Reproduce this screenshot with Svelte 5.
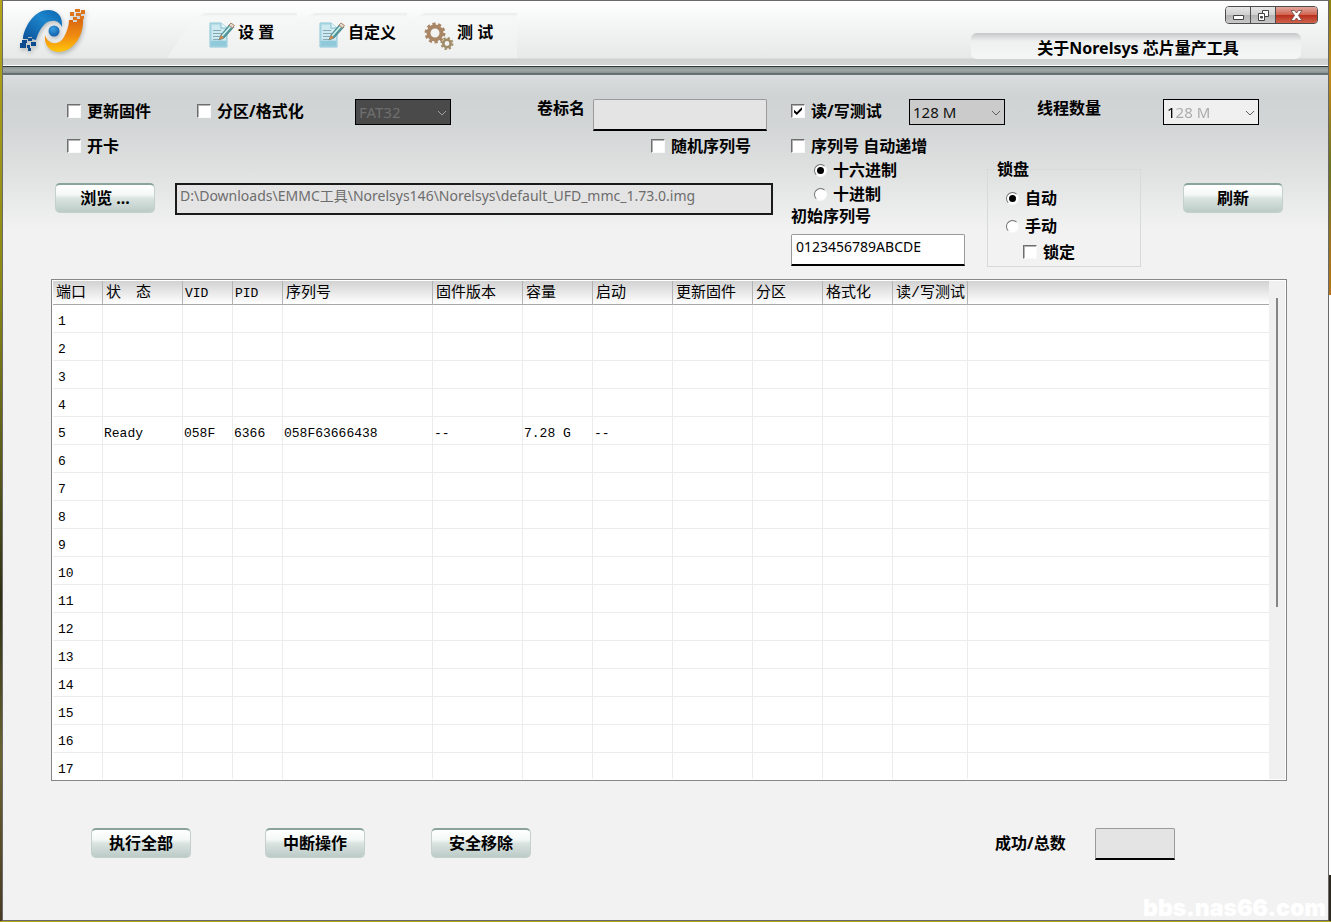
<script>
  const tabs = [
    { name: '设 置', icon: 'note' },
    { name: '自定义', icon: 'note' },
    { name: '测 试', icon: 'gears' }
  ];

  const columns = [
    { name: '端口', width: 50 },
    { name: '状\u3000态', width: 80 },
    { name: 'VID', width: 50, latin: true },
    { name: 'PID', width: 50, latin: true },
    { name: '序列号', width: 150 },
    { name: '固件版本', width: 90 },
    { name: '容量', width: 70 },
    { name: '启动', width: 80 },
    { name: '更新固件', width: 80 },
    { name: '分区', width: 70 },
    { name: '格式化', width: 70 },
    { name: '读/写测试', width: 75 }
  ];

  // values by port, in column order after the port number
  const devices = {
    5: ['Ready', '058F', '6366', '058F63666438', '--', '7.28 G', '--']
  };

  const ports = Array.from({ length: 17 }, (_, i) => i + 1);

  let updateFirmware = false;
  let format = false;
  let openCard = false;
  let randomSerial = false;
  let readWrite = true;
  let autoSerial = false;
  let locked = false;
  let radix = 'hex';
  let lockMode = 'auto';
  let volume = '';
  let firstSerial = '0123456789ABCDE';
  let image = 'D:\\Downloads\\EMMC工具\\Norelsys146\\Norelsys\\default_UFD_mmc_1.73.0.img';
  let total = '';
</script>

{#snippet chevron()}
  <svg class="chevron" width="10" height="6" viewBox="0 0 10 6" aria-hidden="true">
    <path d="M1 1l4 4 4-4" fill="none" stroke="currentColor" />
  </svg>
{/snippet}

<div class="window">
  <header>
    <svg class="logo" width="74" height="52" viewBox="15 5 74 52" aria-hidden="true">
      <defs>
        <linearGradient id="blue" x1="0" y1="1" x2="1" y2="0">
          <stop offset="0" stop-color="#0b4f98" />
          <stop offset="0.6" stop-color="#1c86cc" />
          <stop offset="1" stop-color="#0a62ae" />
        </linearGradient>
        <linearGradient id="orange" x1="0" y1="1" x2="0" y2="0">
          <stop offset="0" stop-color="#ffc60a" />
          <stop offset="0.5" stop-color="#f08a10" />
          <stop offset="1" stop-color="#d96710" />
        </linearGradient>
        <radialGradient id="ball" cx="0.4" cy="0.3" r="0.8">
          <stop offset="0" stop-color="#3da0e0" />
          <stop offset="1" stop-color="#0a56a4" />
        </radialGradient>
      </defs>
      <path d="M23 37C26 23 36 10 48 10C58 10 63 17 62 27C59 20 52 19 46 23C40 28 38 34 36 40L32 39V37H28V39H23Z" fill="url(#blue)" />
      <path d="M28 38h4v3h-4zM22 40h5v3h-5zM31 42h5v4h-5zM20 43h6v5h-6zM27 45h3v3h-3zM28 48h3v3h-3z" fill="#0c4c8e" />
      <circle cx="54" cy="31" r="5.5" fill="url(#ball)" />
      <path d="M45 35C48 45 59 46 64 37C67 31 69 26 69 20H73V22H77V19H83C84 36 73 52 58 52C48 51 44 44 45 35Z" fill="url(#orange)" />
      <path d="M75 9h5v3h-5zM81 10h4v4h-4zM70 12h4v4h-4zM76 13h5v3h-5zM73 17h4v3h-4zM80 16h4v3h-4z" fill="#e0761c" />
    </svg>

    <nav>
      {#each tabs as tab (tab.icon + tab.name)}
        <button class="tab" class:wide={tab.icon === 'gears'}>
          {#if tab.icon === 'note'}
            <svg width="26" height="26" viewBox="0 0 26 26" aria-hidden="true">
              <path d="M1 1h11l6 5v19H1z" fill="#b4dde8" stroke="#8cc6d6" />
              <path d="M2 19h15v5H2z" fill="#8fc9da" />
              <path d="M3 3h8v4h6v11H3z" fill="#cfe9f0" />
              <path d="M12 1v5h6" fill="#e6f5f8" stroke="#8fc4d2" />
              <path d="M4 8.500h8M4 11.500h9M4 14.500h7M4 17.500h6" stroke="#86a9b6" />
              <path d="M10 18l2-5L21 2l4 3L15 16z" fill="#4f9a9e" stroke="#3f7478" stroke-width=".7" />
              <path d="M13 14L22 4" stroke="#d5f0ee" stroke-width="1.6" />
              <path d="M10 18l2-5 3 3z" fill="#d08a50" />
              <path d="M20 3l2-2 3.500 2.500-2 2.500z" fill="#e2dad2" stroke="#b08468" />
            </svg>
          {:else}
            <svg width="32" height="28" viewBox="0 0 32 28" aria-hidden="true">
              <g fill="none" stroke="#a88666">
                <circle cx="11" cy="11" r="6.500" stroke-width="4" />
                <circle cx="11" cy="11" r="9.200" stroke-width="2.500" stroke-dasharray="3.200 2.580" />
                <circle cx="23" cy="21.500" r="3.700" stroke="#a08d68" stroke-width="2.600" />
                <circle cx="23" cy="21.500" r="5.500" stroke="#a08d68" stroke-width="2" stroke-dasharray="2.200 2.120" />
              </g>
            </svg>
          {/if}
          <span>{tab.name}</span>
        </button>
      {/each}
    </nav>

    <div class="title-area">
      <div class="window-buttons">
        <button aria-label="最小化">
          <svg width="13" height="11" viewBox="0 0 13 11"><path d="M1.500 5.500h10v4h-10z" fill="#fff" stroke="#444" /></svg>
        </button>
        <button aria-label="还原">
          <svg width="13" height="11" viewBox="0 0 13 11">
            <path d="M5.500 .5h6v6h-6z" fill="#fff" stroke="#444" />
            <path d="M1.500 3.500h6v7h-6z" fill="#fff" stroke="#444" />
            <path d="M3.500 6.500h2v1.500h-2z" fill="#666" stroke="#444" />
          </svg>
        </button>
        <button class="close" aria-label="关闭">
          <svg width="13" height="11" viewBox="0 0 13 11">
            <path d="M1 .5h3.500l2 2.500 2-2.500H12L8.500 5.500l3.500 5H8.500l-2-2.500-2 2.500H1l3.500-5z" fill="#fff" stroke="#6b4444" stroke-width=".8" />
          </svg>
        </button>
      </div>
      <h1>关于Norelsys 芯片量产工具</h1>
    </div>
  </header>
  <div class="rail"></div>

  <main>
    <form class="settings" on:submit|preventDefault>
      <div class="left">
        <div class="left-options">
          <label class="option"><input type="checkbox" bind:checked={updateFirmware} />更新固件</label>
          <label class="option"><input type="checkbox" bind:checked={format} />分区/格式化</label>
          <div class="select dark">
            <select aria-label="文件系统" disabled><option>FAT32</option></select>
            {@render chevron()}
          </div>
          <label class="caption" for="volume">卷标名</label>
          <input id="volume" class="field" type="text" bind:value={volume} disabled />
        </div>
        <div class="left-options second">
          <label class="option"><input type="checkbox" bind:checked={openCard} />开卡</label>
          <label class="option random"><input type="checkbox" bind:checked={randomSerial} />随机序列号</label>
        </div>
        <div class="browse">
          <button class="action">浏览 ...</button>
          <input class="path" type="text" aria-label="镜像文件" value={image} readonly />
        </div>
      </div>

      <div class="right">
        <div class="test-options">
          <label class="option"><input type="checkbox" bind:checked={readWrite} />读/写测试</label>
          <div class="select">
            <select aria-label="测试大小"><option>128 M</option></select>
            {@render chevron()}
          </div>
          <label class="caption" for="threads">线程数量</label>
          <div class="select light">
            <select id="threads"><option>128 M</option></select>
            {@render chevron()}
          </div>
        </div>
        <div class="serial-options">
          <div class="serial">
            <label class="option"><input type="checkbox" bind:checked={autoSerial} />序列号 自动递增</label>
            <label class="option indent"><input type="radio" bind:group={radix} value="hex" />十六进制</label>
            <label class="option indent"><input type="radio" bind:group={radix} value="dec" />十进制</label>
            <label class="first" for="serial">初始序列号</label>
            <input id="serial" class="field" type="text" bind:value={firstSerial} />
          </div>
          <fieldset>
            <legend>锁盘</legend>
            <label class="option tall"><input type="radio" bind:group={lockMode} value="auto" />自动</label>
            <label class="option tall"><input type="radio" bind:group={lockMode} value="manual" />手动</label>
            <label class="option nested"><input type="checkbox" bind:checked={locked} />锁定</label>
          </fieldset>
          <button class="action refresh">刷新</button>
        </div>
      </div>
    </form>

    <div class="list">
      <div class="rows">
        <table>
          <colgroup>
            {#each columns as column (column.name)}
              <col style="width: {column.width}px" />
            {/each}
            <col />
          </colgroup>
          <thead>
            <tr>
              {#each columns as column (column.name)}
                <th class:latin={column.latin}>{column.name}</th>
              {/each}
              <th></th>
            </tr>
          </thead>
          <tbody>
            {#each ports as port (port)}
              <tr>
                <td class="port">{port}</td>
                {#each columns.slice(1) as column, i (column.name)}
                  <td>{devices[port]?.[i] ?? ''}</td>
                {/each}
                <td></td>
              </tr>
            {/each}
          </tbody>
        </table>
      </div>
      <div class="scrollbar"><div class="thumb"></div></div>
    </div>

    <footer>
      <button class="action">执行全部</button>
      <button class="action">中断操作</button>
      <button class="action">安全移除</button>
      <label for="total">成功/总数</label>
      <input id="total" class="field" type="text" bind:value={total} disabled />
    </footer>
  </main>

  <span class="watermark">bbs.nas66.com</span>
</div>

<style>
  :global(body) {
    margin: 0;
    background:
      linear-gradient(#8a7f12, #c08a1c 8%, #6d7420 18%, #b5771a 32%, #fff 32%, #fff 95%, #2c2a1c 95%) right / 3px 100% no-repeat,
      linear-gradient(#b5a51c, #8c8a14 30%, #5a5c1c 50%, #2e3016 65%, #6a6430 82%, #4a3a24);
  }
  .window {
    position: relative;
    box-sizing: border-box;
    height: calc(100vh - 1px);
    margin: 0 2px;
    border: 1px solid #6a6868;
    display: flex;
    flex-direction: column;
    color: #000;
    font: bold 16px/24px 'Noto Sans', 'Noto Sans CJK SC', sans-serif;
    background: #f2f2f2;
  }
  button, input, select {
    font: inherit;
    color: inherit;
    box-sizing: border-box;
    margin: 0;
  }

  header {
    display: flex;
    height: 64px;
    background: linear-gradient(#fff, #f3f4f4 40%, #e7e9e9 57px, #cdd2d1 58px, #d3d7d6 100%);
  }
  .logo {
    flex: none;
    margin: 4px 0 0 12px;
    filter: drop-shadow(1px 2px 2px rgba(0, 0, 0, 0.25));
  }
  nav {
    display: flex;
    align-items: flex-start;
    margin: 12px 0 0 78px;
  }
  .tab {
    display: flex;
    gap: 3px;
    width: 130px;
    height: 45px;
    margin-right: -20px;
    padding: 7px 0 0 42px;
    border: 0;
    background: linear-gradient(#eaecec, #f6f7f7 4px, #eeefef);
    clip-path: polygon(0 100%, 26px 6px, 38px 0, 100% 0, 100% 100%);
    text-align: left;
    white-space: nowrap;
  }
  .tab.wide {
    margin-right: 0;
    padding-left: 37px;
    gap: 1px;
  }
  .tab svg {
    flex: none;
    margin-top: 2px;
  }

  .title-area {
    flex: 1;
    display: flex;
    flex-direction: column;
    align-items: flex-end;
    padding-top: 5px;
  }
  .window-buttons {
    display: flex;
    margin-right: 10px;
    border: 1px solid #4c4c4c;
    border-radius: 4px;
    overflow: hidden;
  }
  .window-buttons button {
    display: flex;
    align-items: center;
    justify-content: center;
    width: 25px;
    height: 16px;
    padding: 0;
    border: 0;
    border-right: 1px solid #4c4c4c;
    background: linear-gradient(#e6e6e6, #cfcfcf 50%, #b4b4b4 50%, #c8c8c8);
  }
  .window-buttons .close {
    width: 41px;
    border-right: 0;
    background: linear-gradient(#e3a79d, #d0624f 50%, #b92f1b 50%, #d0634c);
  }
  h1 {
    box-sizing: border-box;
    width: 330px;
    height: 26px;
    margin: 9px 27px 0 0;
    padding: 3px 0 0 4px;
    border-radius: 6px;
    background: linear-gradient(#c3c7c7, #eef0f0 8px, #f5f6f6);
    font-size: 16px;
    line-height: 24px;
    text-align: center;
  }
  .rail {
    flex: none;
    height: 11px;
    background: linear-gradient(#fff 1px, #2d3837 1px, #2d3837 2px, #8a9393 2px, #a0a7a7 5px, #899191 8px, #606b6c 8px, #6a7475 10px, #dcdfdf 10px);
  }

  main {
    flex: 1;
    display: flex;
    flex-direction: column;
    min-height: 0;
    padding: 23px 41px 0 48px;
    background: linear-gradient(#dadddd, #d0d3d4 20px, #d3d6d6 50px, #dfe1e1 95px, #f2f2f2 155px);
  }
  .settings {
    display: flex;
    gap: 18px;
    padding: 0 4px;
  }
  .left {
    flex: 1;
  }
  .left-options {
    display: grid;
    grid-template-columns: 130px 158px 1fr 56px 174px;
    align-items: start;
    padding: 0 6px 0 12px;
    height: 35px;
  }
  .left-options.second {
    height: 49px;
  }
  .option {
    display: flex;
    align-items: center;
    gap: 6px;
    height: 24px;
    white-space: nowrap;
  }
  .caption {
    line-height: 18px;
    white-space: nowrap;
  }
  .random {
    grid-column: 5;
    padding-left: 58px;
  }
  .indent {
    padding-left: 23px;
  }
  .tall {
    height: 28px;
  }
  .nested {
    padding-left: 17px;
  }

  input[type='checkbox'],
  input[type='radio'] {
    appearance: none;
    display: flex;
    align-items: center;
    justify-content: center;
    flex: none;
    width: 14px;
    height: 14px;
    border: 1px solid;
    border-color: #6e6e6e #f8f8f8 #f8f8f8 #6e6e6e;
    background: #fff;
  }
  input[type='checkbox'] {
    box-shadow: inset 1px 1px #b4b4b4;
  }
  input[type='radio'] {
    width: 13px;
    height: 13px;
    border-radius: 50%;
  }
  input[type='checkbox']:checked::before {
    content: '';
    width: 8px;
    height: 8px;
    background: #000;
    clip-path: polygon(0 35%, 35% 65%, 100% 0, 100% 35%, 35% 100%, 0 68%);
  }
  input[type='radio']:checked::before {
    content: '';
    width: 7px;
    height: 7px;
    border-radius: 50%;
    background: #000;
  }

  .select {
    position: relative;
    box-sizing: border-box;
    width: 96px;
    height: 26px;
    border: 1px solid #000;
    background: #cbcbcb;
    color: #111;
    font-weight: normal;
    font-size: 15px;
  }
  select {
    appearance: none;
    width: 100%;
    height: 24px;
    padding: 0 0 0 3px;
    border: 0;
    background: transparent;
    opacity: 1;
  }
  .chevron {
    position: absolute;
    right: 3px;
    top: 10px;
    color: #606060;
    pointer-events: none;
  }
  .dark {
    background: #4a4a4a;
    color: #6f6f6f;
  }
  .dark .chevron {
    color: #a0a0a0;
  }
  .light {
    background: #f0f0f0;
  }
  .light select {
    color: transparent;
    background: linear-gradient(90deg, #000 11px, #a8a8a8 11px);
    background-clip: text;
  }

  .field {
    width: 100%;
    height: 32px;
    padding: 0 4px 6px;
    border: 1px solid #9a9a9a;
    border-bottom: 2px solid #000;
    border-radius: 2px 2px 0 0;
    background: #fff;
    font-weight: normal;
    font-size: 14px;
  }
  .field:disabled {
    background: #e4e4e4;
  }
  .browse {
    display: flex;
    gap: 20px;
  }
  .path {
    flex: 1;
    height: 32px;
    padding: 0 3px 8px;
    border: 2px solid #1a1a1a;
    background: #e4e4e4;
    color: #6d6d6d;
    font-weight: normal;
    font-size: 14px;
  }
  .action {
    width: 100px;
    height: 30px;
    padding: 0 0 2px;
    border: 1px solid #c3d0cd;
    border-top: 2px solid #8aa39d;
    border-radius: 5px;
    background: linear-gradient(#fff, #f4f8f7 35%, #d9e3e0 50%, #bccbc7);
    font-size: 16px;
  }

  .right {
    width: 492px;
  }
  .test-options {
    display: grid;
    grid-template-columns: 118px 128px 126px 96px;
    align-items: start;
    height: 35px;
  }
  .serial-options {
    display: flex;
    align-items: flex-start;
  }
  .serial {
    width: 174px;
  }
  .first {
    display: block;
    line-height: 20px;
  }
  .serial .field {
    display: block;
    margin-top: 8px;
  }
  fieldset {
    box-sizing: border-box;
    width: 154px;
    margin: 24px 0 0 22px;
    padding: 4px 0 2px 18px;
    border: 1px solid #d8dada;
  }
  legend {
    margin-left: -10px;
    padding: 0 1px;
    line-height: 22px;
  }
  .refresh {
    margin: 49px 0 0 42px;
  }

  .list {
    flex: 1;
    display: flex;
    min-height: 0;
    margin-top: 12px;
    padding: 1px;
    border: 1px solid #848688;
    background: #fff;
  }
  .rows {
    flex: 1;
    overflow: hidden;
  }
  table {
    table-layout: fixed;
    width: 100%;
    border-collapse: separate;
    border-spacing: 0;
    font: 13px/16px 'Liberation Mono', 'Noto Sans CJK SC', monospace;
  }
  th {
    height: 24px;
    padding: 2px 0 0 3px;
    box-sizing: border-box;
    border-right: 1px solid #b4b4b4;
    border-bottom: 1px solid #a8a8a8;
    background: linear-gradient(#d2d2d2, #fff);
    font-size: 15px;
    font-weight: normal;
    text-align: left;
    white-space: nowrap;
  }
  th:last-child {
    border-right: 0;
  }
  .latin {
    padding-left: 2px;
    font-size: 13px;
  }
  td {
    box-sizing: border-box;
    height: 28px;
    padding: 7px 0 0 1px;
    border-right: 1px solid #ececec;
    border-bottom: 1px solid #ececec;
    white-space: nowrap;
  }
  td:last-child {
    border-right: 0;
  }
  .port {
    padding-left: 5px;
  }
  .scrollbar {
    width: 16px;
    background: #f0f0f0;
  }
  .thumb {
    width: 2px;
    height: 62%;
    margin: 17px 0 0 7px;
    background: #858585;
  }

  footer {
    display: grid;
    grid-template-columns: 174px 166px 1fr 100px 80px;
    align-items: start;
    padding: 47px 112px 60px 40px;
  }
  footer label {
    line-height: 30px;
    white-space: nowrap;
  }

  .watermark {
    position: absolute;
    right: 2px;
    bottom: 0;
    color: #fff;
    font: 900 23px/24px Inter, sans-serif;
  }
</style>
